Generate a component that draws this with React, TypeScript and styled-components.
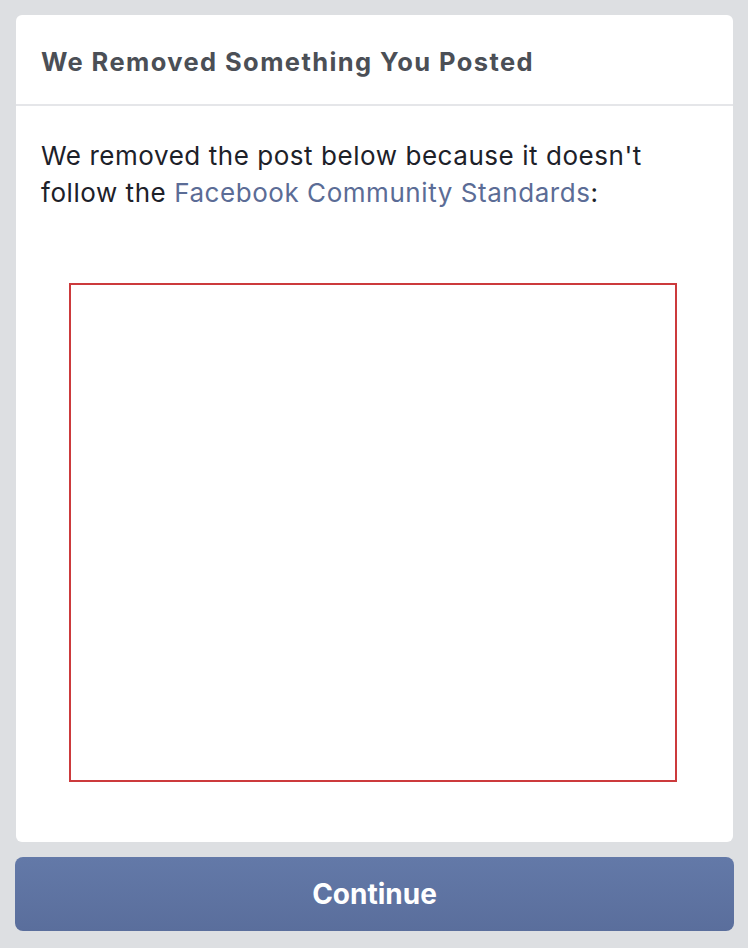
import React from "react";
import styled, { createGlobalStyle } from "styled-components";

const GlobalStyle = createGlobalStyle`
  html, body {
    margin: 0;
    padding: 0;
    background: #dddfe2;
  }
  body {
    font-family: Inter, Roboto, "Liberation Sans", Arial, sans-serif;
    -webkit-font-smoothing: antialiased;
  }
`;

const Page = styled.div`
  width: 748px;
  height: 948px;
  box-sizing: border-box;
  padding: 15px 14px 0 15px;
  display: flex;
  flex-direction: column;
  gap: 15px;
`;

const Card = styled.div`
  background: #fff;
  border-radius: 6px;
  margin: 0 1px;
  height: 827px;
  display: flex;
  flex-direction: column;
`;

const CardHeader = styled.div`
  height: 91px;
  box-sizing: border-box;
  border-bottom: 2px solid #e5e6e9;
  padding: 3px 25px 0;
  display: flex;
  align-items: center;
`;

const Title = styled.h1`
  margin: 0;
  font-size: 25.5px;
  font-weight: 700;
  letter-spacing: 1.4px;
  color: #4b4f56;
`;

const Body = styled.div`
  padding: 31px 25px 0;
  display: flex;
  flex-direction: column;
`;

const Message = styled.p`
  margin: 0;
  font-size: 26px;
  line-height: 37px;
  letter-spacing: 0.55px;
  color: #1d2129;
`;

const Link = styled.a`
  color: #5b6c96;
  text-decoration: none;
`;

const RemovedPost = styled.div`
  margin: 72px 0 0 28px;
  width: 608px;
  height: 499px;
  box-sizing: border-box;
  border: 2px solid #cc3a3c;
  background: #fff;
`;

const ContinueButton = styled.button`
  height: 74px;
  width: 100%;
  border: none;
  border-radius: 8px;
  background: linear-gradient(#6379a8, #5a6e9c);
  color: #fff;
  font-family: inherit;
  font-size: 28px;
  font-weight: 700;
  cursor: pointer;
`;

export default function App() {
  return (
    <>
      <GlobalStyle />
      <Page>
        <Card>
          <CardHeader>
            <Title>We Removed Something You Posted</Title>
          </CardHeader>
          <Body>
            <Message>
              We removed the post below because it doesn't
              <br />
              follow the <Link href="#">Facebook Community Standards</Link>:
            </Message>
            <RemovedPost />
          </Body>
        </Card>
        <ContinueButton>Continue</ContinueButton>
      </Page>
    </>
  );
}
